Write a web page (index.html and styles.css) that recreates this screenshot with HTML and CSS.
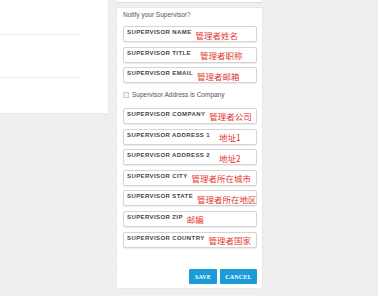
FILE: index.html
```html
<!DOCTYPE html>
<html>
<head>
<meta charset="utf-8">
<link rel="stylesheet" href="styles.css">
</head>
<body>
<div class="page">
  <div class="left-panel">
    <div class="left-row"></div>
    <div class="left-row"></div>
    <div class="left-row last"></div>
  </div>
  <div class="center">
    <div class="top-card"></div>
    <div class="form-panel">
      <div class="notify">Notify your Supervisor?</div>
      <div class="field"><span class="label">SUPERVISOR NAME</span><span class="note">管理者姓名</span></div>
      <div class="field"><span class="label">SUPERVISOR TITLE</span><span class="note wide">管理者职称</span></div>
      <div class="field"><span class="label">SUPERVISOR EMAIL</span><span class="note">管理者邮箱</span></div>
      <div class="check-row"><span class="checkbox"></span><span class="check-text">Supervisor Address is Company</span></div>
      <div class="field"><span class="label">SUPERVISOR COMPANY</span><span class="note">管理者公司</span></div>
      <div class="field"><span class="label">SUPERVISOR ADDRESS 1</span><span class="note wide">地址1</span></div>
      <div class="field"><span class="label">SUPERVISOR ADDRESS 2</span><span class="note wide">地址2</span></div>
      <div class="field"><span class="label">SUPERVISOR CITY</span><span class="note">管理者所在城市</span></div>
      <div class="field"><span class="label">SUPERVISOR STATE</span><span class="note">管理者所在地区</span></div>
      <div class="field"><span class="label">SUPERVISOR ZIP</span><span class="note">邮编</span></div>
      <div class="field"><span class="label">SUPERVISOR COUNTRY</span><span class="note">管理者国家</span></div>
      <div class="actions">
        <button class="btn">SAVE</button>
        <button class="btn">CANCEL</button>
      </div>
    </div>
  </div>
</div>
</body>
</html>
```

FILE: styles.css
```css
html, body {
  margin: 0;
  padding: 0;
}
body {
  width: 378px;
  height: 296px;
  overflow: hidden;
  background-color: #efefef;
  background-image: radial-gradient(circle, #e7e7e7 0.7px, transparent 1px);
  background-size: 5px 5px;
  font-family: "Liberation Sans", Arial, sans-serif;
}
.page {
  display: flex;
  align-items: flex-start;
  gap: 9px;
}
.left-panel {
  width: 108px;
  height: 113px;
  background: #fff;
  box-shadow: 0 0 1px rgba(0,0,0,0.12);
  display: flex;
  flex-direction: column;
}
.left-row {
  height: 38px;
  margin-right: 28px;
  border-bottom: 1px solid #ececec;
  box-sizing: border-box;
}
.left-row:nth-child(2) {
  height: 46px;
}
.left-row.last {
  border-bottom: none;
}
.center {
  width: 145px;
  display: flex;
  flex-direction: column;
  gap: 5px;
}
.top-card {
  height: 3px;
  background: #fff;
  border-bottom: 1px solid #dcdcdc;
  box-sizing: border-box;
}
.form-panel {
  background: #fff;
  height: 280px;
  box-sizing: border-box;
  padding: 3px 5px 0 6px;
  box-shadow: 0 0 1px rgba(0,0,0,0.15);
  display: flex;
  flex-direction: column;
}
.notify {
  font-size: 6.5px;
  color: #555;
  line-height: 8px;
  margin-bottom: 7px;
}
.field {
  height: 16px;
  flex-shrink: 0;
  box-sizing: border-box;
  border: 1px solid #d4d4d4;
  border-radius: 2px;
  box-shadow: 0 1px 1px rgba(0,0,0,0.08);
  margin-bottom: 4.6px;
  display: flex;
  align-items: flex-start;
  padding-left: 3px;
}
.label {
  font-size: 6px;
  font-weight: bold;
  color: #444;
  letter-spacing: 0.4px;
  line-height: 7px;
  padding-top: 2px;
  white-space: nowrap;
}
.note {
  font-family: "Noto Sans CJK SC", sans-serif;
  font-size: 8.5px;
  line-height: 10px;
  color: #e2392f;
  margin-left: 4px;
  padding-top: 2.5px;
  white-space: nowrap;
}
.note.wide {
  margin-left: 9px;
}
.check-row {
  display: flex;
  align-items: center;
  gap: 3px;
  height: 8px;
  flex-shrink: 0;
  margin: 3px 0 9.2px 0;
}
.checkbox {
  width: 4px;
  height: 4px;
  border: 1px solid #cfcfcf;
  background: #f4f4f4;
}
.check-text {
  font-size: 6.5px;
  color: #555;
}
.actions {
  display: flex;
  justify-content: flex-end;
  gap: 3px;
  margin-top: 17px;
}
.btn {
  border: none;
  margin: 0;
  padding: 0;
  height: 15px;
  background: #1b9bd7;
  color: #fff;
  font-family: "Liberation Serif", serif;
  font-weight: bold;
  font-size: 6px;
  letter-spacing: 0.2px;
  border-radius: 1px;
}
.btn:first-child {
  width: 28px;
}
.btn:last-child {
  width: 37px;
}
```
